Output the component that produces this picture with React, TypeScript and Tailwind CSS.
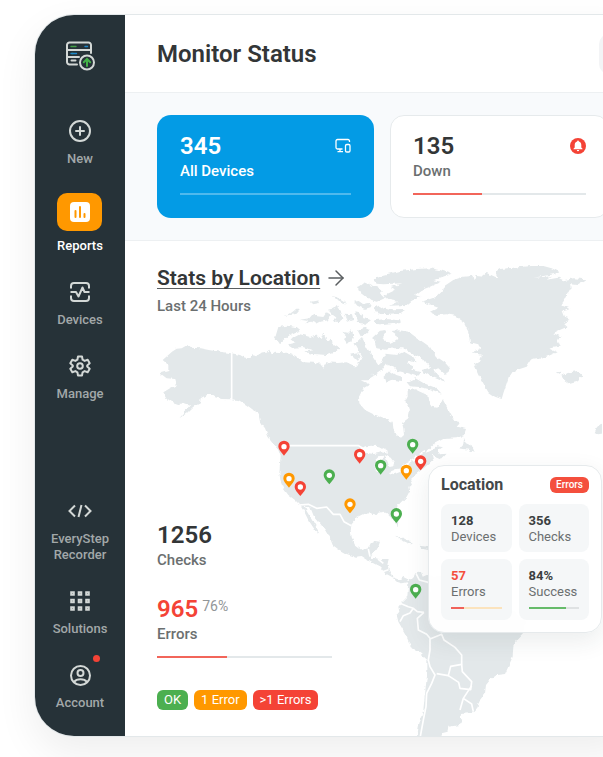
import type { ReactNode } from 'react';
import { ArrowRight, CirclePlus } from 'lucide-react';
import clsx from 'clsx';

type Tone = 'ok' | 'warn' | 'error';

const pinFill: Record<Tone, string> = {
  ok: 'fill-[#4caf50]',
  warn: 'fill-[#ff9800]',
  error: 'fill-[#f44336]',
};

const pins: { x: number; y: number; tone: Tone }[] = [
  { x: 402, y: 575, tone: 'error' },
  { x: 629, y: 599, tone: 'error' },
  { x: 812, y: 619, tone: 'error' },
  { x: 417, y: 671, tone: 'warn' },
  { x: 451, y: 696, tone: 'error' },
  { x: 538, y: 661, tone: 'ok' },
  { x: 692, y: 632, tone: 'ok' },
  { x: 788, y: 569, tone: 'ok' },
  { x: 769, y: 647, tone: 'warn' },
  { x: 600, y: 748, tone: 'warn' },
  { x: 739, y: 777, tone: 'ok' },
  { x: 797, y: 1004, tone: 'ok' },
];

const land = [
  // North and Central America
  'M66 290L80 281L95 280L112 270L120 278L150 280L180 286L210 290L245 295L270 300L285 308L300 308L305 300L322 304L330 293L350 290L358 284L365 298L375 290L400 292L425 298L445 306L460 322L490 323L510 326L520 338L530 322L560 324L590 322L615 334L636 332L650 344L668 350L664 356L672 365L655 376L635 376L660 388L640 400L627 425L628 445L645 465L675 480L705 492L728 500L730 520L740 540L753 548L762 540L760 520L756 504L775 490L780 465L775 450L765 440L773 425L773 405L795 403L810 410L832 420L835 440L845 455L862 458L873 445L878 433L890 455L903 480L915 498L932 502L920 515L948 522L942 540L920 550L880 552L850 568L832 585L826 595L845 588L862 574L876 576L862 586L870 598L890 596L875 612L862 606L846 600L850 620L835 628L815 645L795 660L780 675L786 690L775 695L778 710L770 725L750 745L738 760L732 775L745 800L743 817L735 805L725 787L715 777L700 770L685 773L680 780L665 775L640 777L620 787L605 805L602 825L605 850L615 870L635 885L655 880L662 865L675 858L690 860L685 875L678 887L670 893L660 900L664 908L690 912L716 912L712 930L716 945L725 960L735 970L750 975L760 966L772 972L782 985L770 982L755 985L740 980L725 965L705 955L690 935L670 925L650 913L635 903L615 905L590 897L565 883L548 870L540 850L525 825L510 805L490 780L480 755L465 752L468 765L480 785L495 810L508 833L495 825L475 795L465 775L450 750L435 735L415 720L400 700L392 680L388 655L390 625L392 605L385 585L370 565L355 545L345 520L330 500L325 475L310 465L290 450L265 435L245 433L215 432L190 425L180 418L165 422L152 430L150 445L130 455L110 475L88 490L105 470L120 450L105 445L85 447L65 440L50 430L40 412L60 400L80 390L75 372L50 370L30 355L55 348L55 330L38 315Z',
  'M612 268L636 246L650 276L664 300L686 332L700 306L716 300L712 324L696 346L672 362L650 350L622 334L636 304L622 286Z',
  // South America
  'M775 980L790 968L797 952L812 948L818 965L830 960L860 962L890 966L950 985L985 1030L1040 1045L1090 1065L1130 1100L1120 1133L1100 1155L1090 1175L1088 1205L1075 1235L1065 1257L1040 1260L1020 1275L1008 1290L1005 1315L990 1335L982 1358L968 1373L935 1377L930 1385L940 1395L930 1410L895 1415L893 1430L875 1435L870 1450L800 1450L808 1405L820 1365L825 1315L832 1255L832 1215L810 1195L785 1180L765 1135L745 1100L740 1080L748 1070L745 1055L757 1040L772 1025Z',
  // Greenland
  'M815 140L860 125L875 110L880 95L910 75L940 65L970 62L974 76L980 60L1000 62L1010 54L1045 70L1035 50L1050 42L1090 38L1140 33L1180 33L1205 40L1230 52L1210 58L1150 68L1205 64L1190 74L1225 68L1240 76L1270 70L1310 73L1280 90L1260 88L1262 100L1250 120L1240 140L1232 150L1262 162L1238 168L1245 185L1262 192L1240 205L1252 215L1222 228L1210 235L1235 245L1222 252L1232 275L1195 280L1220 292L1190 305L1145 312L1130 335L1100 345L1078 360L1070 385L1060 415L1055 432L1035 425L1015 412L1000 385L985 360L972 330L990 320L995 300L965 292L990 282L985 268L960 262L955 230L940 200L915 182L890 178L860 180L840 170L865 158Z',
  // Ellesmere
  'M670 75L700 60L750 48L800 42L840 40L870 45L905 56L870 68L850 76L872 80L840 95L815 105L795 120L812 126L785 137L770 150L720 152L745 140L715 134L700 122L738 104L722 96L757 85L700 88L680 86Z',
  'M622 95L632 92L645 82L668 92L690 100L695 110L690 116L704 130L680 140L662 135L640 118L622 106Z',
  // Devon and neighbours
  'M672 158L688 152L700 160L725 166L765 165L752 174L700 178L676 172Z',
  'M672 196L705 192L750 196L752 204L700 210L680 206Z',
  // Baffin
  'M670 245L690 227L712 225L698 248L706 262L722 266L742 252L738 238L724 228L748 226L776 230L800 248L820 262L840 276L858 304L884 322L900 340L888 360L865 340L850 346L874 368L882 380L842 364L812 346L840 338L824 316L792 300L762 280L730 280L706 284L680 280Z',
  'M706 296L740 300L762 290L790 306L800 322L776 314L772 326L790 334L784 344L812 352L800 364L770 354L744 348L730 334L712 330Z',
  'M700 366L718 348L736 360L756 366L756 378L728 374L706 384Z',
  'M770 382L796 370L820 384L860 400L875 416L846 404L808 396L780 394Z',
  // Banks and Victoria
  'M385 216L410 212L440 216L452 226L420 240L400 255L387 268L375 250Z',
  'M418 254L450 238L480 246L498 238L512 252L520 232L532 258L545 248L548 268L568 280L556 292L530 300L490 297L458 290L490 286L462 276L430 278L414 268L440 262Z',
  'M400 182L420 176L436 164L450 164L440 176L422 180Z',
  'M450 194L478 190L488 178L502 184L520 186L530 172L540 178L534 196L512 200L500 206L484 200L466 206L474 198Z',
  'M482 140L505 136L508 144L490 148Z',
  'M545 124L562 126L578 136L592 146L572 140Z',
  'M534 164L552 160L560 150L574 170L580 192L566 202L548 198L560 188L546 178Z',
  'M574 230L594 234L604 224L610 240L604 262L592 266L582 252L590 246Z',
  'M584 176L606 178L610 194L594 200Z',
  'M612 140L626 138L640 148L656 144L664 156L644 162L622 152Z',
  'M616 172L634 176L640 190L664 194L650 206L624 204Z',
  'M622 224L648 218L660 224L646 238L632 244Z',
  'M600 296L622 292L632 304L624 318L612 306Z',
  // Newfoundland
  'M942 548L948 565L966 573L974 592L955 584L928 580L940 566Z',
  // Iceland
  'M1234 362L1246 356L1262 352L1285 347L1300 362L1280 378L1255 385L1240 372Z',
  'M1220 352L1234 350L1232 358Z',
  // British Isles
  'M1334 535L1345 510L1375 500L1375 532L1345 538Z',
  // Cuba and Hispaniola
  'M735 842L760 849L792 866L782 868L755 856Z',
  'M808 872L838 876L836 886L816 882Z',
];

const borders = [
  'M245 293V434',
  'M415 572H626L646 584',
  'M446 750L475 748L500 760L530 756L550 778L570 778L582 800L604 812',
  'M655 882L660 905M684 912L700 925M715 944L698 950',
  'M798 955L808 975L835 982M835 982L842 1010',
  'M750 1100L760 1082L780 1074L790 1060M750 1045L775 1055L790 1060L802 1070L822 1072',
  'M822 1072L802 1090L805 1125L830 1138L840 1150L840 1185L835 1215L840 1235L855 1260L845 1285L830 1315L828 1355L820 1395L810 1450',
  'M840 1152L875 1138L882 1155L915 1177L935 1200L935 1228L902 1234L895 1262L860 1256',
  'M935 1228L937 1250L965 1280L962 1304L930 1300L926 1282L895 1262',
  'M965 1292L940 1330L930 1365M940 1330L965 1347L970 1370',
];

const lakes = [
  'M626 590L648 574L668 572L690 574L712 586L714 596L694 592L672 597L650 594Z',
  'M676 612L684 604L700 602L696 614L690 628L692 645L680 650L674 635Z',
  'M704 600L722 608L732 622L730 634L718 636L712 618Z',
  'M716 652L740 642L758 638L752 650L732 658Z',
  'M754 632L776 622L782 628L762 636Z',
];

const WorldMap = () => (
  <svg
    viewBox="-75 -42 1431 1485"
    className="pointer-events-none absolute top-0 left-0 h-[495px] w-[477px]"
    role="img"
    aria-label="Device locations"
  >
    <defs>
      <filter id="coast" x="-5%" y="-5%" width="110%" height="110%">
        <feTurbulence type="fractalNoise" baseFrequency="0.07" numOctaves={2} seed={4} result="noise" />
        <feDisplacementMap in="SourceGraphic" in2="noise" scale={12} xChannelSelector="R" yChannelSelector="G" />
      </filter>
    </defs>
    <g filter="url(#coast)">
      {land.map((d) => (
        <path key={d} d={d} className="fill-[#e3e8ea]" />
      ))}
      {lakes.map((d) => (
        <path key={d} d={d} className="fill-white" />
      ))}
      <path d="M776 622L800 605L822 590" className="fill-none stroke-white stroke-[5]" />
    </g>
    {borders.map((d) => (
      <path key={d} d={d} strokeLinejoin="round" className="fill-none stroke-white stroke-[5]" />
    ))}
    {pins.map((pin) => (
      <g key={`${pin.x}-${pin.y}`} transform={`translate(${pin.x} ${pin.y})`}>
        <path d="M0 27C-9 16-17 8-17-1a17 17 0 0 1 34 0C17 8 9 16 0 27Z" className={pinFill[pin.tone]} />
        <circle r="8" className="fill-white" />
      </g>
    ))}
  </svg>
);

const Logo = () => (
  <svg viewBox="0 0 30 30" className="size-[30px]" fill="none" strokeLinecap="round">
    <g stroke="#d3d8d6" strokeWidth="2">
      <path d="M12 23.500H4.500A2.500 2.500 0 0 1 2 21V4a2.500 2.500 0 0 1 2.500-2.500h19A2.500 2.500 0 0 1 26 4v8" />
      <path d="M2 9h24M2 16h12M6.500 19.500h4" />
      <circle cx="22" cy="21.500" r="7" />
    </g>
    <path d="M6 5.500h5M7 12.500h1" stroke="#43a047" strokeWidth="1.400" />
    <path d="M20 5.500h2.500M6 12.500h5.500" stroke="#1e88c9" strokeWidth="1.400" />
    <path d="M22 25v-6.500M18.800 21.200l3.200-3.200 3.200 3.200" stroke="#43b047" strokeWidth="2" />
  </svg>
);

const ReportsIcon = () => (
  <svg viewBox="0 0 20 20" className="size-5">
    <rect width="20" height="20" rx="4" fill="#fff" />
    <path d="M5.500 9v6M10 5v10M14.500 12v3" stroke="#ff9800" strokeWidth="2" strokeLinecap="round" />
  </svg>
);

const DevicesIcon = () => (
  <svg viewBox="0 0 24 24" className="size-6" fill="none" stroke="currentColor" strokeWidth="2" strokeLinejoin="round">
    <path d="M3 8.500V6a3 3 0 0 1 3-3h12a3 3 0 0 1 3 3v2.500M3 15.500V18a3 3 0 0 0 3 3h12a3 3 0 0 0 3-3v-2.500" />
    <path d="M2.500 12H8l2.500 4.500 4-9L16.500 12h5" />
  </svg>
);

const GearIcon = () => (
  <svg viewBox="0 0 24 24" className="size-6" fill="none" stroke="currentColor" strokeWidth="2" strokeLinejoin="round">
    <path d="M10 2.500h4l.6 3.200 2 1.200 3.100-1.100 2 3.500-2.500 2.100v1.200l2.500 2.100-2 3.500-3.100-1.100-2 1.200-.6 3.200h-4l-.6-3.200-2-1.200-3.100 1.100-2-3.500 2.500-2.100v-1.200L2.300 9.300l2-3.500 3.100 1.100 2-1.200z" />
    <circle cx="12" cy="12" r="2.800" />
  </svg>
);

const CodeIcon = () => (
  <svg viewBox="0 0 24 24" className="size-6" fill="none" stroke="currentColor" strokeWidth="2">
    <path d="M7 6.500L1.500 12 7 17.500M17 6.500l5.500 5.500-5.500 5.500M13.500 6l-3 12" />
  </svg>
);

const GridIcon = () => (
  <svg viewBox="0 0 24 24" className="size-6" fill="none" stroke="currentColor" strokeWidth="2">
    {[3.2, 10.7, 18.2].map((y) => (
      <path key={y} d={`M3.200 ${y}h2.600v2.600H3.200zM10.700 ${y}h2.600v2.600h-2.600zM18.200 ${y}h2.600v2.600h-2.600z`} />
    ))}
  </svg>
);

const AccountIcon = () => (
  <svg viewBox="0 0 24 24" className="size-6" fill="none" stroke="currentColor" strokeWidth="2">
    <circle cx="12.500" cy="12.500" r="9.500" />
    <circle cx="12.500" cy="10" r="3" />
    <path d="M6 19c1.500-2 4-2.800 6.500-2.800s5 .8 6.500 2.800" />
  </svg>
);

const MonitorIcon = () => (
  <svg viewBox="0 0 16 16" className="size-4" fill="none" stroke="currentColor" strokeWidth="1.300" strokeLinejoin="round">
    <path d="M14.500 4V3A1.500 1.500 0 0 0 13 1.500H2.500A1.500 1.500 0 0 0 1 3v6.500A1.500 1.500 0 0 0 2.500 11H7.500M5 11v2.500M2.500 13.700h5.500" />
    <rect x="10.500" y="6.500" width="4.500" height="7.500" rx="1.300" />
  </svg>
);

const BellIcon = () => (
  <svg viewBox="0 0 16 16" className="size-4">
    <circle cx="8" cy="8" r="8" fill="#f44336" />
    <path d="M8 2.600c.6 0 .9.400.9.900 1.600.5 2.400 1.900 2.400 3.500v2.500l1.200 1.300v.5h-9v-.5l1.200-1.300V7c0-1.600.8-3 2.400-3.500 0-.5.3-.9.900-.9zM6.800 12h2.400a1.200 1.200 0 0 1-2.400 0z" fill="#fff" />
  </svg>
);

interface NavItemProps {
  label: string;
  icon: ReactNode;
  active?: boolean;
  hasDot?: boolean;
}

const NavItem = ({ label, icon, active, hasDot }: NavItemProps) => (
  <a
    href="#"
    className={clsx(
      'relative flex flex-col items-center text-center text-[13px] leading-4 font-medium',
      active ? 'gap-[7px] text-white' : 'gap-2 text-[#a2a8a9]',
    )}
  >
    <span
      className={clsx(
        'flex items-center justify-center',
        active ? 'h-[38px] w-[45px] rounded-[10px] bg-[#ff9800]' : 'size-6 text-[#d3d8d6]',
      )}
    >
      {icon}
    </span>
    <span className="max-w-[70px]">{label}</span>
    {hasDot && <span className="absolute -top-2 right-1 size-[7px] rounded-full bg-[#f44336]" />}
  </a>
);

const Sidebar = () => (
  <nav className="flex w-[90px] shrink-0 flex-col items-center bg-[#263238] pt-[26px] pb-[25px]">
    <Logo />
    <div className="mt-12 flex flex-col items-center gap-[26px]">
      <NavItem label="New" icon={<CirclePlus className="size-6" strokeWidth={2} />} />
      <NavItem label="Reports" icon={<ReportsIcon />} active />
      <NavItem label="Devices" icon={<DevicesIcon />} />
      <NavItem label="Manage" icon={<GearIcon />} />
    </div>
    <div className="mt-auto flex flex-col items-center gap-[26px]">
      <NavItem label="EveryStep Recorder" icon={<CodeIcon />} />
      <NavItem label="Solutions" icon={<GridIcon />} />
      <NavItem label="Account" icon={<AccountIcon />} hasDot />
    </div>
  </nav>
);

interface MiniStatProps {
  value: string;
  label: string;
  valueClass?: string;
  children?: ReactNode;
}

const MiniStat = ({ value, label, valueClass, children }: MiniStatProps) => (
  <div className="rounded-lg bg-[#f5f7f8] px-[10px] pt-[9px] pb-[7px] text-[13px] leading-4">
    <p className={clsx('font-bold', valueClass || 'text-[#3b3f41]')}>{value}</p>
    <p className="text-[#6b6f70]">{label}</p>
    {children}
  </div>
);

const LocationCard = () => (
  <aside className="absolute top-[224px] left-[303px] w-[174px] rounded-2xl border border-[#e6eaec] bg-white/95 px-3 pt-[10px] pb-3 shadow-[0_8px_24px_rgba(38,50,56,0.09)]">
    <div className="flex items-center justify-between">
      <h3 className="text-base leading-[18px] font-bold text-[#444849]">Location</h3>
      <span className="rounded-md bg-[#f44f3d] px-[6px] text-[10px] leading-4 font-medium text-white">Errors</span>
    </div>
    <div className="mt-[10px] grid grid-cols-2 gap-[7px]">
      <MiniStat value="128" label="Devices" />
      <MiniStat value="356" label="Checks" />
      <MiniStat value="57" label="Errors" valueClass="text-[#f44f3d]">
        <div className="mt-[7px] mb-1 flex h-[2px] bg-[#fbe3bd]">
          <span className="w-1/4 bg-[#f0625a]" />
        </div>
      </MiniStat>
      <MiniStat value="84%" label="Success">
        <div className="mt-[7px] mb-1 flex h-[2px] bg-[#dfe2e3]">
          <span className="w-3/4 bg-[#66bb6a]" />
        </div>
      </MiniStat>
    </div>
  </aside>
);

const legend = [
  { label: 'OK', color: 'bg-[#4caf50]' },
  { label: '1 Error', color: 'bg-[#ff9800]' },
  { label: '>1 Errors', color: 'bg-[#f44336]' },
];

const App = () => {
  return (
    <div className="min-h-screen overflow-hidden bg-white pt-[14px] pb-5 pl-[34px] font-['Roboto',sans-serif] text-[#333637]">
      <div className="-mr-6 flex overflow-hidden rounded-l-[40px] border border-[#e3e8ea] bg-white shadow-[0_16px_40px_rgba(0,0,0,0.07)]">
        <Sidebar />
        <main className="flex min-w-0 flex-1 flex-col">
          <header className="flex h-[78px] items-center justify-between border-b border-[#edf0f2] pl-8">
            <h1 className="text-2xl font-semibold">Monitor Status</h1>
            <button type="button" aria-label="Menu" className="h-10 w-[27px] rounded-l-[10px] bg-[#f3f4f6]" />
          </header>

          <section className="flex gap-4 border-b border-[#edf0f2] bg-[#f8fafc] pt-[22px] pb-[22px] pl-8">
            <div className="h-[103px] w-[217px] shrink-0 rounded-[14px] bg-[#039be5] px-[23px] pt-[18px] text-white">
              <div className="flex items-center justify-between">
                <p className="text-2xl leading-[26px] font-semibold">345</p>
                <MonitorIcon />
              </div>
              <p className="text-[15px] leading-6 font-medium">All Devices</p>
              <div className="mt-[10px] h-[2px] bg-[#4fb9ed]" />
            </div>
            <div className="h-[103px] w-[219px] shrink-0 rounded-[14px] border border-[#e6eaec] bg-white px-[22px] pt-[17px]">
              <div className="flex items-center justify-between">
                <p className="text-2xl leading-[26px] font-semibold">135</p>
                <BellIcon />
              </div>
              <p className="text-[15px] leading-6 font-medium text-[#6b6f70]">Down</p>
              <div className="mt-[10px] flex h-[2px] bg-[#e3e8ea]">
                <span className="w-2/5 bg-[#f2655a]" />
              </div>
            </div>
          </section>

          <section className="relative flex min-h-[495px] flex-1 flex-col pt-6 pb-[26px] pl-8">
            <WorldMap />
            <div className="relative">
              <a href="#" className="flex items-center gap-1">
                <h2 className="text-[21px] leading-[26px] font-semibold underline decoration-[#5a5e60] decoration-1 underline-offset-3 [text-decoration-skip-ink:none]">
                  Stats by Location
                </h2>
                <ArrowRight className="size-6 text-[#5a5e60]" strokeWidth={1.5} />
              </a>
              <p className="mt-[3px] text-[15px] leading-6 font-medium text-[#6b6f70]">Last 24 Hours</p>
            </div>

            <div className="relative mt-auto w-[175px]">
              <p className="text-2xl leading-[26px] font-semibold">1256</p>
              <p className="text-[15px] leading-6 font-medium text-[#6b6f70]">Checks</p>
              <div className="mt-6 flex items-start gap-1">
                <p className="text-2xl leading-[26px] font-semibold text-[#f44336]">965</p>
                <span className="text-[14px] leading-5 text-[#929698]">76%</span>
              </div>
              <p className="text-[15px] leading-6 font-medium text-[#6b6f70]">Errors</p>
              <div className="mt-[10px] flex h-[2px] bg-[#e3e8ea]">
                <span className="w-2/5 bg-[#f2655a]" />
              </div>
            </div>

            <ul className="relative mt-8 flex gap-[6px]">
              {legend.map((item) => (
                <li
                  key={item.label}
                  className={clsx('rounded-md px-[7px] text-[13px] leading-5 text-white', item.color)}
                >
                  {item.label}
                </li>
              ))}
            </ul>

            <LocationCard />
          </section>
        </main>
      </div>
    </div>
  );
};

export default App;
